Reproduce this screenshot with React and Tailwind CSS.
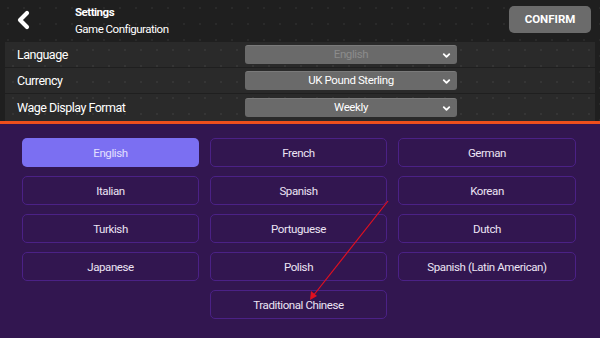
import { ChevronDown } from 'lucide-react'

const languages = [
  'English', 'French', 'German',
  'Italian', 'Spanish', 'Korean',
  'Turkish', 'Portuguese', 'Dutch',
  'Japanese', 'Polish', 'Spanish (Latin American)',
]

const settings = [
  { label: 'Language', value: 'English', dim: true },
  { label: 'Currency', value: 'UK Pound Sterling' },
  { label: 'Wage Display Format', value: 'Weekly' },
]

export default function App() {
  return (
    <div className="relative w-[600px] h-[338px] overflow-hidden bg-[#321650] font-['Roboto',sans-serif]">
      <div className="bg-[#1f1f1f] bg-[radial-gradient(#ffffff0d_1.5px,transparent_1.5px)] bg-[size:16px_16px]">
        {/* Header */}
        <div className="h-[42px] flex items-start">
          <button className="w-[46px] h-[42px] flex items-center justify-center pb-[2px]">
            <svg width="16" height="20" viewBox="0 0 16 20">
              <path d="M12 3 L5 10 L12 17" fill="none" stroke="white" strokeWidth="4.2" strokeLinecap="round" strokeLinejoin="round" />
            </svg>
          </button>
          <div className="ml-[29px] mt-[5px] text-white leading-[14px] tracking-[-0.5px]">
            <div className="text-[11.5px] font-bold">Settings</div>
            <div className="text-[11.5px] mt-[3px]">Game Configuration</div>
          </div>
          <button className="ml-auto mr-[9px] mt-[6px] w-[82px] h-[27px] rounded-[5px] bg-[#6b6b6b] text-white text-[11.5px] font-bold">
            CONFIRM
          </button>
        </div>

        {/* Settings rows */}
        <div className="mx-[5px] bg-[#2a2a2a] bg-[radial-gradient(#ffffff0d_1.5px,transparent_1.5px)] bg-[size:16px_16px]">
          {settings.map((s) => (
            <div key={s.label} className="h-[26px] flex items-center border-b border-[#1f1f1f] last:border-b-0 last:h-[27px]">
              <div className="w-[240px] pl-[12px] pt-[2px] text-white text-[12.5px] tracking-[-0.5px]">{s.label}</div>
              <div className="w-[212px] h-[19px] rounded-[3px] bg-[#6a6a6a] border-t border-[#7a7a7a] relative flex items-center justify-center">
                <span className={`text-[11.5px] tracking-[-0.4px] ${s.dim ? 'text-[#8c8c8c]' : 'text-white'}`}>{s.value}</span>
                <ChevronDown className="absolute right-[5px] w-[11px] h-[11px] text-white" strokeWidth={4} />
              </div>
            </div>
          ))}
        </div>
      </div>

      <div className="h-[3px] bg-[#ee4f1c]" />

      {/* Language grid */}
      <div className="pl-[22px] pt-[14px] grid grid-cols-[177px_177px_178px] gap-x-[11px] gap-y-[9px]">
        {languages.map((l, i) => (
          <div
            key={l}
            className={`h-[29px] rounded-[5px] flex items-center justify-center pt-[2px] text-[11.5px] tracking-[-0.4px] ${
              i === 0 ? 'bg-[#7b6ff2] text-[#e4e0ff]' : 'border border-[#4b2186] text-[#ece4f4]'
            }`}
          >
            {l}
          </div>
        ))}
        <div />
        <div className="h-[29px] rounded-[5px] flex items-center justify-center pt-[2px] text-[11.5px] tracking-[-0.4px] border border-[#4b2186] text-[#ece4f4]">
          Traditional Chinese
        </div>
      </div>

      {/* Annotation arrow */}
      <svg className="absolute left-0 top-0 pointer-events-none" width="600" height="338">
        <line x1="388" y1="201" x2="313" y2="296" stroke="#e01020" strokeWidth="1.2" />
        <path d="M310 300 L311 291 L317 296 Z" fill="#e01020" />
      </svg>
    </div>
  )
}
